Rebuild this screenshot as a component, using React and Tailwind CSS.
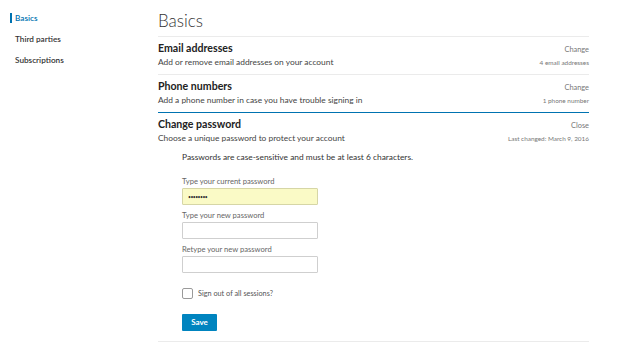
import { useState } from 'react'

/* ── Collapsed setting row ───────────────────────────────────────── */
function SettingRow({ title, desc, action, meta, open = false }) {
  return (
    <div className={`flex items-start justify-between border-t ${open ? 'border-[#0073b1]' : 'border-[#ebebeb]'} pt-[4px] pb-[6px]`}>
      <div className="flex flex-col">
        <p className="text-[10.6px] font-bold text-[#222] leading-[14px]">{title}</p>
        <p className="text-[8.4px] text-[#444] leading-[12px] mt-[1px]">{desc}</p>
      </div>
      <div className="flex flex-col items-end pt-[4px]">
        <p className="text-[7.4px] text-[#777] leading-[10px]">{action}</p>
        <p className="text-[6.4px] text-[#777] leading-[10px] mt-[3px]">{meta}</p>
      </div>
    </div>
  )
}

/* ── Labelled password field ─────────────────────────────────────── */
function Field({ label, value = '', filled = false }) {
  return (
    <div className="flex flex-col">
      <label className="text-[7.6px] text-[#666] leading-[10px]">{label}</label>
      <input
        type="password"
        defaultValue={value}
        className={`mt-[2px] w-[136px] h-[17px] border ${filled ? 'bg-[#fafac6] border-[#d6d6a6]' : 'bg-white border-[#cfcfcf]'} rounded-[1px] px-[5px] text-[5px] tracking-[-0.5px] text-[#333] outline-none`}
      />
    </div>
  )
}

export default function App() {
  const [signOut, setSignOut] = useState(false)

  return (
    <div className="w-[630px] h-[344px] bg-white flex font-['Lato','Open_Sans',sans-serif] overflow-hidden">
      {/* Sidebar */}
      <nav className="w-[158px] shrink-0 flex flex-col pt-[12px] gap-[9px]">
        <div className="flex items-center h-[12px]">
          <span className="w-[2px] h-[10px] bg-[#0073b1] ml-[10px]" />
          <span className="ml-[3px] text-[8.2px] leading-[12px] font-semibold text-[#0073b1]">Basics</span>
        </div>
        <span className="ml-[15px] h-[12px] leading-[12px] text-[8.2px] font-semibold text-[#333]">Third parties</span>
        <span className="ml-[15px] h-[12px] leading-[12px] text-[8.2px] font-semibold text-[#333]">Subscriptions</span>
      </nav>

      {/* Main */}
      <main className="w-[431px] flex flex-col">
        <h1 className="text-[17px] font-light text-[#333] leading-[22px] pt-[10px] pb-[4px]">Basics</h1>

        <SettingRow
          title="Email addresses"
          desc="Add or remove email addresses on your account"
          action="Change"
          meta="4 email addresses"
        />
        <SettingRow
          title="Phone numbers"
          desc="Add a phone number in case you have trouble signing in"
          action="Change"
          meta="1 phone number"
        />
        <SettingRow
          title="Change password"
          desc="Choose a unique password to protect your account"
          action="Close"
          meta="Last changed: March 9, 2016"
          open
        />

        {/* Expanded form */}
        <div className="flex flex-col pl-[24px] pt-[1px] pb-[10px] border-b border-[#ebebeb]">
          <p className="text-[8.4px] text-[#333] leading-[12px]">
            Passwords are case-sensitive and must be at least 6 characters.
          </p>
          <div className="flex flex-col gap-[5px] mt-[13px]">
            <Field label="Type your current password" value="12345678" filled />
            <Field label="Type your new password" />
            <Field label="Retype your new password" />
          </div>
          <label className="flex items-center gap-[5px] mt-[15px] h-[11px] cursor-pointer">
            <input
              type="checkbox"
              checked={signOut}
              onChange={e => setSignOut(e.target.checked)}
              className="appearance-none w-[11px] h-[11px] border border-[#9a9a9a] rounded-[2px] bg-white"
            />
            <span className="text-[7.3px] text-[#555] leading-[11px]">Sign out of all sessions?</span>
          </label>
          <button className="mt-[15px] w-[35px] h-[17px] bg-[#0084bf] text-white text-[8px] leading-[17px] font-bold rounded-[1px]">
            Save
          </button>
        </div>
      </main>
    </div>
  )
}
